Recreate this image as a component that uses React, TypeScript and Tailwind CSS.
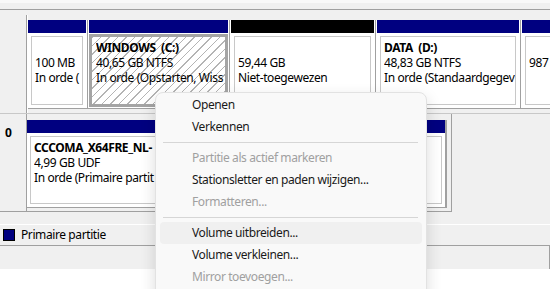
import React from "react";

type Part = {
  w: string;
  head: string;
  lines: string[];
  selected?: boolean;
};

const parts: Part[] = [
  { w: "w-[58px]", head: "bg-[#000080]", lines: ["", "100 MB", "In orde ("] },
  {
    w: "w-[139px]",
    head: "bg-[#000080]",
    lines: ["WINDOWS  (C:)", "40,65 GB NTFS", "In orde (Opstarten, Wiss"],
    selected: true,
  },
  { w: "w-[143px]", head: "bg-black", lines: ["", "59,44 GB", "Niet-toegewezen"] },
  { w: "w-[142px]", head: "bg-[#000080]", lines: ["DATA  (D:)", "48,83 GB NTFS", "In orde (Standaardgegev"] },
  { w: "w-[60px]", head: "bg-[#000080]", lines: ["", "987", ""] },
];

const menu: ({ label: string; disabled?: boolean; hover?: boolean } | "sep")[] = [
  { label: "Openen" },
  { label: "Verkennen" },
  "sep",
  { label: "Partitie als actief markeren", disabled: true },
  { label: "Stationsletter en paden wijzigen..." },
  { label: "Formatteren...", disabled: true },
  "sep",
  { label: "Volume uitbreiden...", hover: true },
  { label: "Volume verkleinen..." },
  { label: "Mirror toevoegen...", disabled: true },
];

function Lines({ lines }: { lines: string[] }) {
  return (
    <div className="flex flex-col pt-[3px] pl-[3px] whitespace-pre overflow-hidden">
      {lines.map((l, i) => (
        <div key={i} className={`h-[15px] leading-[15px] overflow-hidden ${i === 0 ? "font-bold" : ""}`}>
          {l}
        </div>
      ))}
    </div>
  );
}

function Sep() {
  return (
    <div className="w-[3px] shrink-0 flex justify-center bg-white border-b border-[#a0a0a0]">
      <div className="w-px bg-[#a0a0a0]" />
    </div>
  );
}

export default function App() {
  return (
    <div
      className="relative w-[550px] h-[289px] overflow-hidden bg-white text-[12px] tracking-[-0.4px] text-black"
      style={{ fontFamily: '"Noto Sans", "Liberation Sans", sans-serif' }}
    >
      <div className="h-[3px] bg-[#f9f9f9]" />
      <div className="h-[6px] bg-[#f0f0f0]" />
      <div className="h-px bg-[#a0a0a0]" />

      {/* disk 0 */}
      <div className="flex h-[104px] bg-[#f0f0f0] border-b border-[#c8c8c8]">
        <div className="w-[27px] shrink-0 border-r border-[#a0a0a0] mt-[5px]" />
        <div className="flex-1 pt-[5px] overflow-hidden">
          <div className="h-full border-l border-white pt-[5px]">
            <div className="flex">
              {parts.map((p, i) => (
                <React.Fragment key={i}>
                  {i > 0 && <Sep />}
                  <div className={`${p.w} shrink-0 flex flex-col bg-white border-b border-[#a0a0a0]`}>
                    <div className={`h-[13px] ${p.head}`} />
                    <div className="h-[75px] p-[3px] pt-px">
                      {p.selected ? (
                        <div className="h-[73px] -mx-[3px] -mb-px border-[3px] border-[#a4a4a4] pl-[1px] bg-[image:repeating-linear-gradient(135deg,#b4b4b4_0px,#b4b4b4_1px,#ffffff_1px,#ffffff_6px)]">
                          <Lines lines={p.lines} />
                        </div>
                      ) : (
                        <div className="h-[69px] mt-[2px] border border-[#c8c8c8]">
                          <Lines lines={p.lines} />
                        </div>
                      )}
                    </div>
                  </div>
                </React.Fragment>
              ))}
            </div>
          </div>
        </div>
      </div>

      {/* cd-rom 0 */}
      <div className="flex h-[110px] bg-[#f0f0f0]">
        <div className="w-[27px] h-[98px] shrink-0 border-r border-b border-[#a0a0a0] pl-[5px] pt-[10px] font-bold">
          0
        </div>
        <div className="w-[425px] h-[98px] border-r border-b border-[#a0a0a0] pt-[6px]">
          <div className="w-[420px] flex flex-col bg-white border-r-2 border-b border-[#a0a0a0]">
            <div className="h-[13px] bg-[#000080]" />
            <div className="h-[74px] p-[3px]">
              <div className="h-[68px] border border-[#c8c8c8]">
                <Lines lines={["CCCOMA_X64FRE_NL-", "4,99 GB UDF", "In orde (Primaire partit"]} />
              </div>
            </div>
          </div>
        </div>
      </div>

      {/* legend */}
      <div className="h-px bg-white" />
      <div className="h-[21px] bg-[#f0f0f0] flex items-center pl-[3px] gap-[6px] border-b border-[#a0a0a0]">
        <div className="w-[12px] h-[12px] bg-[#000080] border border-black" />
        <span>Primaire partitie</span>
      </div>
      <div className="h-[23px] bg-[#f0f0f0] border-r border-[#a0a0a0]" />

      {/* context menu */}
      <div className="absolute left-[155px] top-[92px] w-[272px] h-[210px] rounded-[8px] border border-[#e2e2e2] bg-[#f9f9f9] shadow-[0_6px_16px_rgba(0,0,0,0.14)] pt-px">
        {menu.map((m, i) =>
          m === "sep" ? (
            <div key={i} className="h-[9px] pt-[4px] pl-[7px] pr-[8px]">
              <div className="h-px bg-[#d6d6d6]" />
            </div>
          ) : (
            <div
              key={i}
              className={`mx-[4px] h-[22px] leading-[22px] pl-[32px] rounded-[4px] ${
                m.hover ? "bg-[#f0f0f0]" : ""
              } ${m.disabled ? "text-[#a0a0a0]" : "text-[#1a1a1a]"}`}
            >
              {m.label}
            </div>
          )
        )}
      </div>
    </div>
  );
}
